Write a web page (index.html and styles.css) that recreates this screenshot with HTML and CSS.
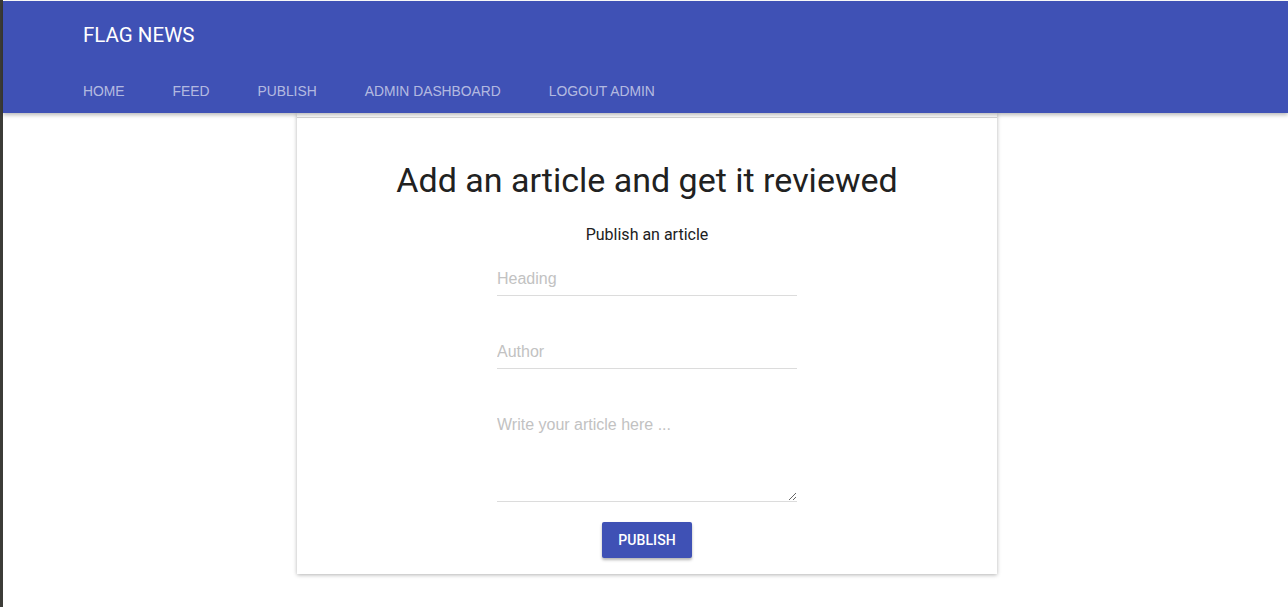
FILE: index.html
```html
<!DOCTYPE html>
<html lang="en">
<head>
<meta charset="utf-8">
<title>Flag News</title>
<link rel="stylesheet" href="styles.css">
</head>
<body>
<div class="frame">
  <header class="appbar">
    <div class="brand">FLAG NEWS</div>
    <nav class="nav">
      <a class="nav-item">HOME</a>
      <a class="nav-item">FEED</a>
      <a class="nav-item">PUBLISH</a>
      <a class="nav-item">ADMIN DASHBOARD</a>
      <a class="nav-item">LOGOUT ADMIN</a>
    </nav>
  </header>
  <main class="main">
    <section class="card">
      <div class="card-rule"></div>
      <h1 class="title">Add an article and get it reviewed</h1>
      <p class="subtitle">Publish an article</p>
      <form class="form">
        <input class="field" type="text" placeholder="Heading">
        <input class="field" type="text" placeholder="Author">
        <textarea class="field area" placeholder="Write your article here ..."></textarea>
        <button class="btn" type="button">PUBLISH</button>
      </form>
    </section>
  </main>
</div>
</body>
</html>
```
FILE: styles.css
```css
html, body {
  margin: 0;
  padding: 0;
  background: #ffffff;
}
body {
  font-family: Roboto, "Liberation Sans", sans-serif;
  height: 607px;
  overflow: hidden;
}
.frame {
  border-left: 3px solid #3c3c38;
  padding-top: 1px;
  min-height: 606px;
}
.appbar {
  position: relative;
  z-index: 2;
  background: #3f51b5;
  height: 112px;
  box-shadow: 0 2px 4px rgba(0, 0, 0, 0.28);
  padding: 2px 0 0 80px;
  box-sizing: border-box;
}
.brand {
  height: 64px;
  line-height: 64px;
  color: #ffffff;
  font-size: 20.5px;
  font-weight: 400;
}
.nav {
  display: flex;
  height: 46px;
  align-items: center;
  gap: 48px;
  padding-top: 2px;
  box-sizing: border-box;
}
.nav-item {
  color: rgba(255, 255, 255, 0.62);
  font-family: "Liberation Sans", Arial, sans-serif;
  font-size: 13.85px;
  line-height: 44px;
}
.main {
  padding-left: 3px;
}
.card {
  width: 700px;
  margin: 0 auto;
  background: #ffffff;
  box-shadow: 0 1px 4px rgba(0, 0, 0, 0.3);
  padding: 4px 0 16px;
  display: flex;
  flex-direction: column;
  align-items: center;
}
.card-rule {
  align-self: stretch;
  height: 1px;
  background: #d4d4d4;
}
.title {
  margin: 42px 0 0;
  font-size: 34px;
  font-weight: 400;
  line-height: 40px;
  color: #212121;
}
.subtitle {
  margin: 25px 0 0;
  font-size: 16px;
  line-height: 20px;
  color: #212121;
}
.form {
  width: 300px;
  margin-top: 20px;
  display: flex;
  flex-direction: column;
  align-items: center;
}
.field {
  width: 100%;
  box-sizing: border-box;
  border: none;
  border-bottom: 1px solid #dcdcdc;
  outline: none;
  padding: 0 0 2px;
  height: 31px;
  font-family: "Liberation Sans", Arial, sans-serif;
  font-size: 16px;
  color: #333;
  background: transparent;
  margin-bottom: 42px;
}
.field::placeholder {
  color: #c2c2c2;
}
.area {
  height: 91px;
  padding: 5px 0 0;
  line-height: 18px;
  margin-bottom: 20px;
  resize: vertical;
}
.btn {
  height: 36px;
  padding: 0 16px;
  border: none;
  border-radius: 2px;
  background: #3f51b5;
  color: #ffffff;
  font-family: Roboto, sans-serif;
  font-weight: 500;
  font-size: 14px;
  letter-spacing: 0.1px;
  box-shadow: 0 2px 3px rgba(0, 0, 0, 0.3);
}
```
